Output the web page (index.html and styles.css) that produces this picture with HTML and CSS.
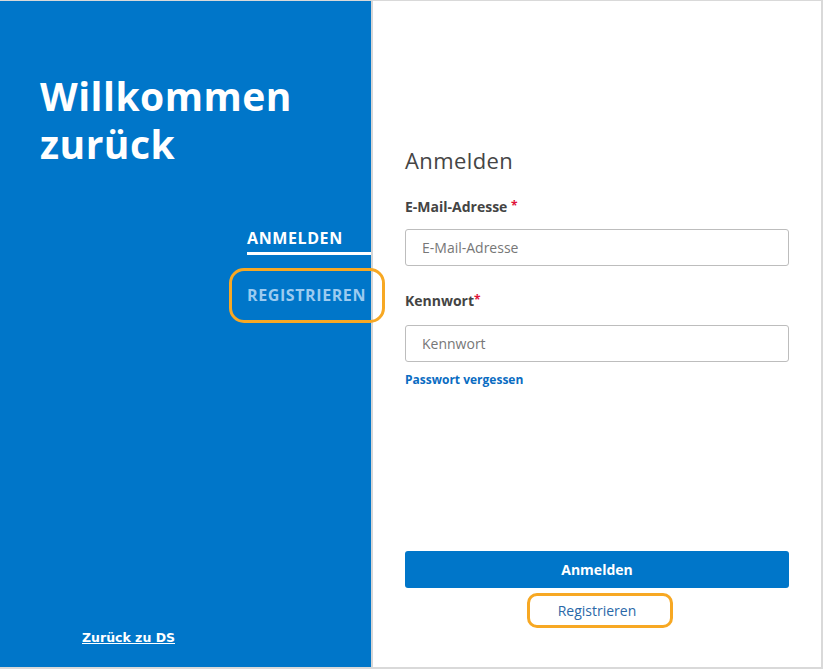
FILE: index.html
```html
<!DOCTYPE html>
<html lang="de">
<head>
<meta charset="utf-8">
<title>Anmelden</title>
<link rel="stylesheet" href="styles.css">
</head>
<body>
<div class="page">
  <aside class="side">
    <h1 class="welcome"><span class="wl">Willkommen</span><span class="wl">zurück</span></h1>
    <nav class="tabs">
      <a class="tab tab-active" href="#">ANMELDEN</a>
      <a class="tab tab-inactive" href="#">REGISTRIEREN</a>
      <span class="mark mark-tab"></span>
    </nav>
    <a class="back" href="#">Zurück zu DS</a>
  </aside>
  <main class="main">
    <h2 class="title">Anmelden</h2>
    <label class="label" for="email">E-Mail-Adresse <span class="req">*</span></label>
    <input class="input" id="email" type="text" placeholder="E-Mail-Adresse">
    <label class="label label-pw" for="pw">Kennwort<span class="req">*</span></label>
    <input class="input input-pw" id="pw" type="password" placeholder="Kennwort">
    <a class="forgot" href="#">Passwort vergessen</a>
    <div class="actions">
      <button class="btn" type="button">Anmelden</button>
      <div class="reg-wrap">
        <a class="reg" href="#">Registrieren</a>
        <span class="mark mark-reg"></span>
      </div>
    </div>
  </main>
</div>
</body>
</html>
```
FILE: styles.css
```css
* { box-sizing: border-box; }
html, body { margin: 0; padding: 0; background: #fff; }
body { font-family: "Open Sans", "Liberation Sans", sans-serif; }

.page {
  display: flex;
  width: 823px;
  height: 669px;
  border-top: 1px solid #d9d9d9;
  border-right: 2px solid #d9d9d9;
  border-bottom: 2px solid #d9d9d9;
}

.side {
  width: 373px;
  background: #0076c9;
  border-right: 2px solid #d6d6d6;
  display: flex;
  flex-direction: column;
  position: relative;
}

.welcome {
  margin: 72px 0 0 40px;
  color: #fff;
  font-size: 39px;
  font-weight: 700;
  letter-spacing: 0.5px;
  display: flex;
  flex-direction: column;
  gap: 2px;
}
.wl { display: block; line-height: 46px; }

.tabs {
  position: relative;
  margin: 60px 0 0 247px;
  display: flex;
  flex-direction: column;
}
.tab {
  font-size: 16px;
  font-weight: 700;
  text-decoration: none;
  letter-spacing: 0.6px;
  white-space: nowrap;
}
.tab-active {
  color: #fff;
  padding-bottom: 3px;
  border-bottom: 3px solid #fff;
}
.tab-inactive {
  color: #9ccbf0;
  margin-top: 29px;
}

.mark {
  position: absolute;
  border: 3px solid #f7a823;
  pointer-events: none;
}
.mark-tab {
  left: -18px;
  top: 41px;
  width: 156px;
  height: 55px;
  border-radius: 15px;
}

.back {
  margin: auto 0 22px 82px;
  color: #fff;
  font-family: "DejaVu Sans", Verdana, sans-serif;
  font-size: 12.5px;
  font-weight: 700;
  text-decoration: underline;
}

.main {
  flex: 1;
  padding: 144px 32px 0 32px;
  display: flex;
  flex-direction: column;
}

.title {
  margin: 0;
  font-size: 22px;
  font-weight: 400;
  color: #454545;
  letter-spacing: 0.4px;
}

.label {
  margin-top: 22px;
  font-size: 14px;
  font-weight: 700;
  color: #444;
}
.label-pw { margin-top: 25px; }
.req { color: #e0123a; font-size: 12px; vertical-align: top; }

.input {
  margin-top: 13px;
  width: 100%;
  height: 37px;
  border: 1px solid #bdbdbd;
  border-radius: 3px;
  padding: 0 16px;
  font-family: inherit;
  font-size: 14px;
  color: #333;
}
.input-pw { margin-top: 15px; }
.input::placeholder { color: #777; }

.forgot {
  margin-top: 9px;
  font-size: 12px;
  font-weight: 700;
  color: #0a6cc2;
  text-decoration: none;
  align-self: flex-start;
}

.actions {
  margin-top: auto;
  margin-bottom: 46px;
  display: flex;
  flex-direction: column;
  align-items: center;
}
.btn {
  width: 100%;
  height: 37px;
  border: 0;
  border-radius: 3px;
  background: #0076c9;
  color: #fff;
  font-family: inherit;
  font-size: 14px;
  font-weight: 700;
}
.reg-wrap {
  position: relative;
  margin-top: 11px;
}
.reg {
  font-size: 14px;
  color: #2a68a8;
  text-decoration: none;
}
.mark-reg {
  left: -31px;
  top: -6px;
  width: 146px;
  height: 35px;
  border-radius: 10px;
}
```
